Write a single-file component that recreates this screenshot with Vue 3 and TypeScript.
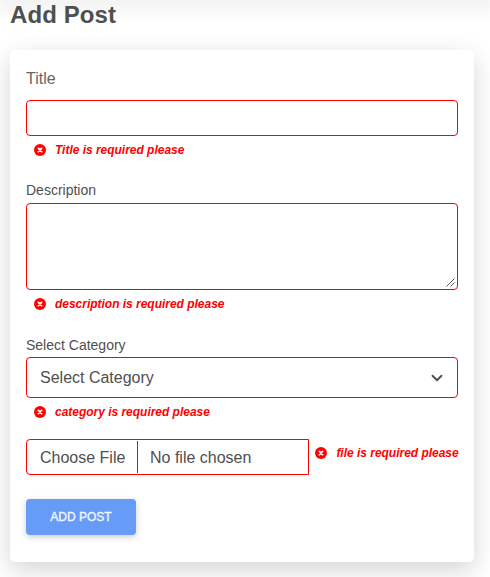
<script setup lang="ts">
import { defineComponent, h, ref } from 'vue'

const title = ref('')
const description = ref('')

const FieldError = defineComponent({
  props: { text: { type: String, required: true } },
  setup(props) {
    return () =>
      h('div', { class: 'error' }, [
        h('svg', { class: 'error-icon', viewBox: '0 0 12 12', 'aria-hidden': 'true' }, [
          h('circle', { cx: 6, cy: 6, r: 6, fill: 'currentColor' }),
          h('path', {
            d: 'M4.4 4.4l3.2 3.2M7.6 4.4L4.4 7.6',
            stroke: '#fff',
            'stroke-width': 1.8,
            'stroke-linecap': 'round',
          }),
        ]),
        h('span', { class: 'error-text' }, props.text),
      ])
  },
})
</script>

<template>
  <main class="page">
    <div class="navbar-edge"></div>
    <h1 class="heading">Add Post</h1>
    <form class="card" @submit.prevent>
      <label class="label label-lg" for="title">Title</label>
      <input id="title" v-model="title" class="control title-input" type="text" />
      <FieldError text="Title is required please" />

      <label class="label label-description" for="description">Description</label>
      <div class="textarea-wrap">
        <textarea id="description" v-model="description" class="control description-input"></textarea>
        <svg class="grip" viewBox="0 0 9 9" aria-hidden="true">
          <path d="M0.5 8.5l8-8M4.5 8.5l4-4" />
        </svg>
      </div>
      <FieldError text="description is required please" />

      <label class="label label-category">Select Category</label>
      <div class="control select">
        <span>Select Category</span>
        <svg class="chevron" viewBox="0 0 16 16" aria-hidden="true">
          <path d="M2 5l6 6 6-6" />
        </svg>
      </div>
      <FieldError text="category is required please" />

      <div class="file-row">
        <div class="file">
          <span class="file-button">Choose File</span>
          <span class="file-name">No file chosen</span>
        </div>
        <FieldError text="file is required please" />
      </div>

      <button class="submit" type="submit">ADD POST</button>
    </form>
  </main>
</template>

<style>
body {
  background: #fff;
  overflow: hidden;
}
</style>

<style scoped>
.page {
  box-sizing: border-box;
  height: 577px;
  padding: 0 16px 0 10px;
  overflow: hidden;
  font-family: "Liberation Sans", Arial, sans-serif;
  color: #4f4f4f;
}
.page * {
  box-sizing: border-box;
}
.navbar-edge {
  height: 0;
  margin: 0 -16px 0 -10px;
  box-shadow: 0 0 20px 6px rgba(0, 0, 0, 0.1);
}
.heading {
  position: relative;
  margin: 0;
  height: 50px;
  font-size: 24px;
  line-height: 30px;
  font-weight: 700;
  letter-spacing: 0.1px;
}
.card {
  display: flex;
  flex-direction: column;
  height: 512px;
  padding: 17px 16px 16px;
  border-radius: 5px;
  background: #fff;
  box-shadow: 0 8px 24px 0 rgba(0, 0, 0, 0.17);
}
.label {
  height: 20px;
  font-size: 14px;
  line-height: 20px;
}
.label-lg {
  height: 24px;
  margin-bottom: 9px;
  font-size: 16px;
  line-height: 24px;
  color: #666;
}
.label-description {
  margin: 16px 0 3px;
}
.label-category {
  margin: 17px 0 2px;
}
.control {
  width: 100%;
  margin: 0;
  padding: 4px 12px;
  border: 1px solid #f00;
  border-radius: 4px;
  outline: 0;
  background: #fff;
  color: inherit;
  font: 16px "Liberation Sans", Arial, sans-serif;
}
.title-input {
  height: 36px;
}
.textarea-wrap {
  position: relative;
}
.description-input {
  display: block;
  height: 87px;
  resize: none;
}
.grip {
  position: absolute;
  right: 3px;
  bottom: 3px;
  width: 9px;
  height: 9px;
  fill: none;
  stroke: #444;
  stroke-width: 0.9;
  pointer-events: none;
}
.select {
  display: flex;
  align-items: center;
  justify-content: space-between;
  height: 41px;
  padding: 0 14px 0 13px;
}
.chevron {
  width: 12px;
  height: 12px;
  fill: none;
  stroke: #4f4f4f;
  stroke-width: 2.5;
  stroke-linecap: round;
  stroke-linejoin: round;
}
:deep(.error) {
  display: flex;
  align-items: center;
  gap: 9px;
  height: 28px;
  padding-left: 8px;
  color: #f00;
  font-size: 12px;
  font-style: italic;
  font-weight: 700;
  letter-spacing: -0.02px;
  white-space: nowrap;
}
:deep(.error-icon) {
  flex: none;
  width: 12px;
  height: 12px;
}
.file-row {
  display: flex;
  height: 36px;
  margin-top: 13px;
}
.file-row :deep(.error) {
  padding-left: 6.4px;
}
.file {
  display: flex;
  flex: none;
  width: 283px;
  padding: 1px 0;
  border: 1px solid #f00;
  border-radius: 4px 0 0 4px;
  font-size: 16px;
  line-height: 34px;
}
.file-button {
  width: 111px;
  padding-left: 13px;
  border-right: 1px solid #f00;
  white-space: nowrap;
}
.file-name {
  padding-left: 12px;
}
.file-button,
.file-name {
  height: 32px;
}
.submit {
  width: 110px;
  height: 36px;
  margin: 24px 0 0;
  padding: 0;
  border: 0;
  border-radius: 4px;
  background: #669bf7;
  color: #f2f7ff;
  font: 500 12px "Liberation Sans", Arial, sans-serif;
  -webkit-text-stroke: 0.35px currentColor;
  box-shadow: 0 2px 6px rgba(0, 0, 0, 0.2);
}
</style>
